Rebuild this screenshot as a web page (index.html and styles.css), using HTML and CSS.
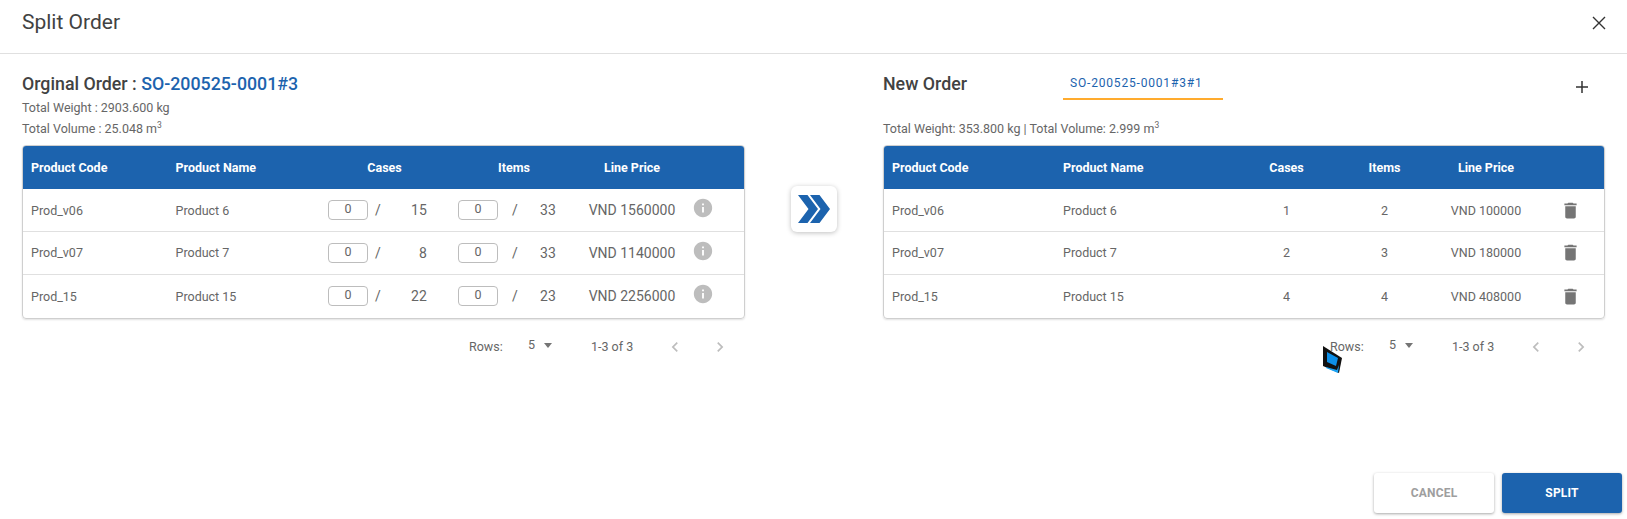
FILE: index.html
```html
<!DOCTYPE html>
<html lang="en">
<head>
  <meta charset="UTF-8" />
  <title>Split Order</title>
  <link rel="stylesheet" href="styles.css">
</head>
<body>
  <div class="dialog">
    <header class="dialog-head">
      <h2>Split Order</h2>
      <svg class="close-icon" viewBox="0 0 14 14"><path d="M1 1l12 12M13 1L1 13" /></svg>
    </header>

    <main class="dialog-body">
      <section class="panel panel-left">
        <div class="panel-head">
          <h3>Orginal Order : <span class="order-no">SO-200525-0001#3</span></h3>
          <p class="meta">Total Weight : 2903.600 kg</p>
          <p class="meta">Total Volume : 25.048 m<sup>3</sup></p>
        </div>
        <div class="table-card">
          <table>
            <colgroup>
              <col class="l-code"><col class="l-name"><col class="l-cases"><col class="l-items"><col class="l-price"><col>
            </colgroup>
            <thead>
              <tr><th>Product Code</th><th>Product Name</th><th class="center">Cases</th><th class="center">Items</th><th class="center">Line Price</th><th></th></tr>
            </thead>
            <tbody>
              <tr>
                <td>Prod_v06</td><td>Product 6</td>
                <td><div class="qty qty-cases"><span class="qty-input">0</span><span class="slash">/</span><span class="qty-total">15</span></div></td>
                <td><div class="qty qty-items"><span class="qty-input">0</span><span class="slash">/</span><span class="qty-total">33</span></div></td>
                <td class="center price">VND 1560000</td>
                <td class="info-cell"><svg class="info-icon" viewBox="0 0 24 24"><path d="M12 2C6.48 2 2 6.48 2 12s4.48 10 10 10 10-4.48 10-10S17.52 2 12 2zm1 15h-2v-6h2v6zm0-8h-2V7h2v2z" /></svg></td>
              </tr>
              <tr>
                <td>Prod_v07</td><td>Product 7</td>
                <td><div class="qty qty-cases"><span class="qty-input">0</span><span class="slash">/</span><span class="qty-total">8</span></div></td>
                <td><div class="qty qty-items"><span class="qty-input">0</span><span class="slash">/</span><span class="qty-total">33</span></div></td>
                <td class="center price">VND 1140000</td>
                <td class="info-cell"><svg class="info-icon" viewBox="0 0 24 24"><path d="M12 2C6.48 2 2 6.48 2 12s4.48 10 10 10 10-4.48 10-10S17.52 2 12 2zm1 15h-2v-6h2v6zm0-8h-2V7h2v2z" /></svg></td>
              </tr>
              <tr>
                <td>Prod_15</td><td>Product 15</td>
                <td><div class="qty qty-cases"><span class="qty-input">0</span><span class="slash">/</span><span class="qty-total">22</span></div></td>
                <td><div class="qty qty-items"><span class="qty-input">0</span><span class="slash">/</span><span class="qty-total">23</span></div></td>
                <td class="center price">VND 2256000</td>
                <td class="info-cell"><svg class="info-icon" viewBox="0 0 24 24"><path d="M12 2C6.48 2 2 6.48 2 12s4.48 10 10 10 10-4.48 10-10S17.52 2 12 2zm1 15h-2v-6h2v6zm0-8h-2V7h2v2z" /></svg></td>
              </tr>
            </tbody>
          </table>
        </div>
        <div class="pager">
          <span class="pager-label">Rows:</span>
          <span class="pager-size">5</span>
          <span class="caret"></span>
          <span class="pager-range">1-3 of 3</span>
          <svg class="chev chev-prev" viewBox="0 0 24 24"><path d="M15.41 7.41L14 6l-6 6 6 6 1.41-1.41L10.83 12z" /></svg>
          <svg class="chev chev-next" viewBox="0 0 24 24"><path d="M10 6L8.59 7.41 13.17 12l-4.58 4.59L10 18l6-6z" /></svg>
        </div>
      </section>

      <div class="move-col">
        <button class="move-btn" aria-label="Move">
          <svg viewBox="0 0 32 28"><path d="M0 0h9.5L20 14 9.5 28H0l10.5-14z M12 0h9.5L32 14 21.500 28H12l10.500-14z" /></svg>
        </button>
      </div>

      <section class="panel panel-right">
        <div class="panel-head">
          <div class="new-order-row">
            <h3>New Order</h3>
            <div class="tab">SO-200525-0001#3#1</div>
            <svg class="plus-icon" viewBox="0 0 12 12"><path d="M6 0v12M0 6h12" /></svg>
          </div>
          <p class="meta meta-right">Total Weight: 353.800 kg | Total Volume: 2.999 m<sup>3</sup></p>
        </div>
        <div class="table-card">
          <table>
            <colgroup>
              <col class="r-code"><col class="r-name"><col class="r-cases"><col class="r-items"><col class="r-price"><col>
            </colgroup>
            <thead>
              <tr><th>Product Code</th><th>Product Name</th><th class="center">Cases</th><th class="center">Items</th><th class="center">Line Price</th><th></th></tr>
            </thead>
            <tbody>
              <tr>
                <td>Prod_v06</td><td>Product 6</td><td class="center">1</td><td class="center">2</td><td class="center">VND 100000</td>
                <td class="trash-cell"><svg class="trash-icon" viewBox="0 0 24 24"><path d="M6 19c0 1.100.9 2 2 2h8c1.100 0 2-.9 2-2V7H6v12zM19 4h-3.500l-1-1h-5l-1 1H5v2h14V4z" /></svg></td>
              </tr>
              <tr>
                <td>Prod_v07</td><td>Product 7</td><td class="center">2</td><td class="center">3</td><td class="center">VND 180000</td>
                <td class="trash-cell"><svg class="trash-icon" viewBox="0 0 24 24"><path d="M6 19c0 1.100.9 2 2 2h8c1.100 0 2-.9 2-2V7H6v12zM19 4h-3.500l-1-1h-5l-1 1H5v2h14V4z" /></svg></td>
              </tr>
              <tr>
                <td>Prod_15</td><td>Product 15</td><td class="center">4</td><td class="center">4</td><td class="center">VND 408000</td>
                <td class="trash-cell"><svg class="trash-icon" viewBox="0 0 24 24"><path d="M6 19c0 1.100.9 2 2 2h8c1.100 0 2-.9 2-2V7H6v12zM19 4h-3.500l-1-1h-5l-1 1H5v2h14V4z" /></svg></td>
              </tr>
            </tbody>
          </table>
        </div>
        <div class="pager">
          <span class="pager-label">Rows:</span>
          <span class="pager-size">5</span>
          <span class="caret"></span>
          <span class="pager-range">1-3 of 3</span>
          <svg class="chev chev-prev" viewBox="0 0 24 24"><path d="M15.41 7.41L14 6l-6 6 6 6 1.41-1.41L10.83 12z" /></svg>
          <svg class="chev chev-next" viewBox="0 0 24 24"><path d="M10 6L8.59 7.41 13.17 12l-4.58 4.59L10 18l6-6z" /></svg>
        </div>
      </section>
    </main>

    <footer class="dialog-foot">
      <button class="btn btn-cancel">CANCEL</button>
      <button class="btn btn-split">SPLIT</button>
    </footer>

    <svg class="cursor" viewBox="0 0 19 27">
      <path fill="#111" d="M0 0l19 12-3 15-16-7z" />
      <path fill="#0d8fe8" d="M4 6l11 6-2 8-9-4z" />
      <path fill="#1aa3f5" d="M3 21l11 3 2-5-1 8-12-5z" />
    </svg>
  </div>
</body>
</html>
```

FILE: styles.css
```css
* {
  box-sizing: border-box;
}
html, body {
  margin: 0;
  height: 100%;
}
body {
  font-family: Roboto, "Liberation Sans", sans-serif;
  color: #666;
  background: #fff;
  overflow: hidden;
}
.dialog {
  position: relative;
  height: 100vh;
  display: flex;
  flex-direction: column;
}

/* head */
.dialog-head {
  height: 54px;
  flex: none;
  display: flex;
  align-items: center;
  justify-content: space-between;
  padding: 0 21px 8px 22px;
  border-bottom: 1px solid #e0e0e0;
}
.dialog-head h2 {
  margin: -1px 0 0;
  font-size: 21px;
  font-weight: 400;
  color: #424242;
}
.close-icon {
  width: 14px;
  height: 14px;
  fill: none;
  stroke: #333;
  stroke-width: 1.4;
}

/* body */
.dialog-body {
  flex: 1;
  display: flex;
  padding: 18px 22px 0;
}
.panel-left {
  width: 723px;
  flex: none;
}
.panel-right {
  width: 722px;
  flex: none;
}
.move-col {
  flex: 1;
  display: flex;
  justify-content: center;
  padding-top: 114px;
}
.move-btn {
  width: 46px;
  height: 46px;
  padding: 0;
  border: none;
  border-radius: 6px;
  background: #fff;
  box-shadow: 0 1px 5px rgba(0,0,0,0.25);
  display: flex;
  align-items: center;
  justify-content: center;
}
.move-btn svg {
  width: 32px;
  height: 28px;
  fill: #1c63ae;
}

.panel-head {
  height: 73px;
}
.panel-head h3 {
  margin: 0;
  font-size: 17.800px;
  line-height: 23px;
  font-weight: 500;
  color: #424242;
}
.order-no {
  color: #1c63ae;
}
.meta {
  margin: 0;
  font-size: 12.5px;
  line-height: 21px;
  color: #666;
}
.panel-head h3 + .meta {
  margin-top: 2px;
}
.meta sup {
  font-size: 8.500px;
  line-height: 0;
}
.new-order-row {
  height: 46px;
  display: flex;
  align-items: flex-start;
}
.new-order-row h3 {
  width: 180px;
  line-height: 24px;
}
.tab {
  width: 160px;
  height: 28px;
  padding: 1px 0 0 7px;
  font-size: 12px;
  line-height: 21px;
  letter-spacing: 0.82px;
  color: #1c63ae;
  border-bottom: 2px solid #ffab2e;
}
.plus-icon {
  width: 12px;
  height: 12px;
  margin: 9px 0 0 353px;
  fill: none;
  stroke: #333;
  stroke-width: 1.5;
}

/* tables */
.table-card {
  border: 1px solid #cfcfcf;
  border-radius: 4px;
  overflow: hidden;
  box-shadow: 0 1px 2px rgba(0,0,0,0.12);
}
table {
  width: 100%;
  border-collapse: collapse;
  table-layout: fixed;
  font-size: 12.5px;
}
th {
  height: 43px;
  padding: 0 0 0 8px;
  background: #1c63ae;
  color: #fff;
  font-weight: 700;
  text-align: left;
}
td {
  height: 42.500px;
  padding: 0 0 0 8px;
  border-top: 1px solid #e0e0e0;
  color: #666;
}
tbody tr:first-child td {
  border-top: none;
}
tbody tr:last-child td {
  height: 43.500px;
}
th.center, td.center {
  text-align: center;
  padding-left: 0;
}
td.price {
  font-size: 14px;
}
.l-code { width: 144.500px; }
.l-name { width: 151.500px; }
.l-cases { width: 131px; }
.l-items { width: 128px; }
.l-price { width: 108px; }
.r-code { width: 171px; }
.r-name { width: 170px; }
.r-cases { width: 123px; }
.r-items { width: 73px; }
.r-price { width: 130px; }

.qty {
  display: flex;
  align-items: center;
  font-size: 14px;
}
.qty-input {
  width: 40px;
  height: 20px;
  border: 1px solid #bdbdbd;
  border-radius: 4px;
  text-align: center;
  font-size: 12.5px;
  line-height: 16px;
}
.slash {
  margin-left: 7px;
}
.qty-total {
  width: 46px;
  text-align: right;
}
.qty-cases {
  margin-left: 1px;
}
.qty-items .qty-total {
  width: 38px;
}
.qty-items .slash {
  margin-left: 14px;
}
.info-cell {
  padding-left: 6px;
}
.info-icon {
  display: block;
  width: 22px;
  height: 22px;
  margin-top: -4px;
  fill: #bdbdbd;
}
.trash-cell {
  padding-left: 9px;
}
.trash-icon {
  display: block;
  width: 21px;
  height: 21px;
  fill: #757575;
}

/* pager */
.pager {
  height: 44px;
  margin-top: 6px;
  display: flex;
  align-items: center;
  font-size: 12.5px;
  color: #666;
}
.pager-label {
  margin-left: 447px;
  width: 59px;
}
.pager-size {
  width: 15px;
  margin-top: -4px;
}
.caret {
  width: 0;
  height: 0;
  margin-top: -3px;
  margin-left: 1px;
  border-left: 4.500px solid transparent;
  border-right: 4.500px solid transparent;
  border-top: 5px solid #757575;
}
.pager-range {
  margin-left: 39px;
  width: 74px;
}
.chev {
  width: 20px;
  height: 20px;
  fill: #bdbdbd;
}
.chev-next {
  margin-left: 25px;
}

/* foot */
.dialog-foot {
  flex: none;
  display: flex;
  justify-content: flex-end;
  gap: 8px;
  padding: 0 5px 6px;
}
.btn {
  width: 120px;
  height: 40px;
  border: none;
  border-radius: 3px;
  font-family: inherit;
  font-size: 12px;
  font-weight: 700;
  letter-spacing: 0.2px;
  box-shadow: 0 1px 3px rgba(0,0,0,0.35);
}
.btn-cancel {
  background: #fff;
  color: #9e9e9e;
}
.btn-split {
  background: #1c63ae;
  color: #fff;
}

/* screen capture cursor */
.cursor {
  position: absolute;
  left: 1323px;
  top: 346px;
  width: 19px;
  height: 27px;
}
```
